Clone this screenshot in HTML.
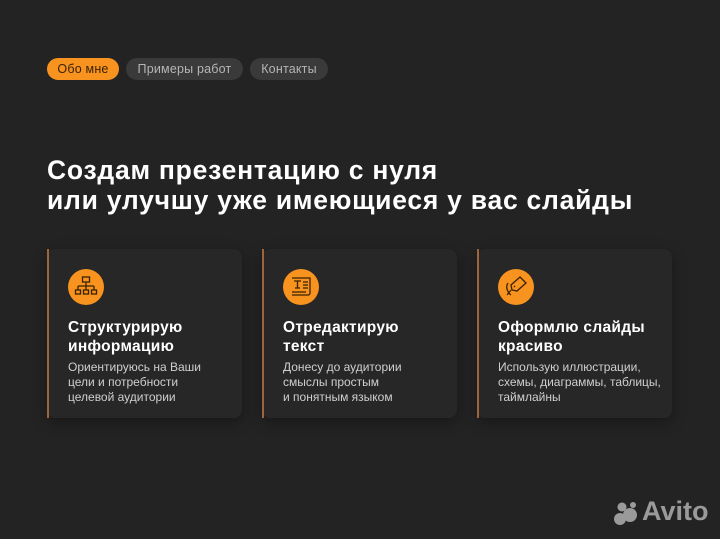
<!DOCTYPE html>
<html><head><meta charset="utf-8"><style>
*{margin:0;padding:0;box-sizing:border-box}
body{width:720px;height:539px;background:#232323;font-family:"Liberation Sans",sans-serif;position:relative;overflow:hidden;color:#fff}
.pill{position:absolute;top:58px;height:22px;border-radius:11px;font-size:12.5px;line-height:22px;text-align:center;color:#b5b5b5;background:#3a3a3a;letter-spacing:0.2px}
h1{position:absolute;left:47px;top:155px;font-size:26.5px;line-height:30px;font-weight:bold;color:#fff;letter-spacing:0.75px;white-space:nowrap}
.card{position:absolute;top:249px;height:169px;width:195px;background:#272727;border-radius:8px;box-shadow:0 4px 14px rgba(0,0,0,.35)}
.card:before{content:"";position:absolute;left:0;top:0;bottom:0;width:2px;background:#a0643a}
.ic{position:absolute;left:21px;top:20px;width:36px;height:36px;border-radius:50%;background:#f7931e}
.t{position:absolute;left:21px;top:69px;font-size:15.5px;line-height:19px;font-weight:bold;letter-spacing:0.3px;white-space:nowrap}
.d{position:absolute;left:21px;top:111px;font-size:12px;line-height:15px;color:#cfcfcf;white-space:nowrap}
</style></head><body>
<div class="pill" style="left:47px;width:72px;background:#f7931e;color:#3a2200">Обо мне</div>
<div class="pill" style="left:126px;width:117px">Примеры работ</div>
<div class="pill" style="left:250px;width:78px">Контакты</div>
<h1>Создам презентацию с нуля<br>или улучшу уже имеющиеся у вас слайды</h1>

<div class="card" style="left:47px"><div class="ic"><svg width="36" height="36" viewBox="0 0 36 36" fill="none" stroke="#3a2200" stroke-width="1.3"><rect x="14.5" y="8" width="7" height="5"/><path d="M18 13v4M10 17h16M10 17v4M18 17v4M26 17v4"/><rect x="7.5" y="21" width="5" height="4"/><rect x="15.5" y="21" width="5" height="4"/><rect x="23.5" y="21" width="5" height="4"/></svg></div>
<div class="t">Структурирую<br>информацию</div><div class="d">Ориентируюсь на Ваши<br>цели и потребности<br>целевой аудитории</div></div>

<div class="card" style="left:262px"><div class="ic"><svg width="36" height="36" viewBox="0 0 36 36" fill="none" stroke="#3a2200" stroke-width="1.3"><path d="M9 9h18v15a2 2 0 0 1-2 2H9"/><path d="M11 12h7M14.5 12v7M12 19h5M20 13h5M20 16h5M20 19h5M9 23h14"/></svg></div>
<div class="t">Отредактирую<br>текст</div><div class="d">Донесу до аудитории<br>смыслы простым<br>и понятным языком</div></div>

<div class="card" style="left:477px"><div class="ic"><svg width="36" height="36" viewBox="0 0 36 36" fill="none" stroke="#3a2200" stroke-width="1.3"><path d="M22 8l6 6-9 8-5-1-1-5z"/><path d="M13 21l-4 5M17 17l-1 1"/><path d="M10 14c-3 4 0 10 3 12"/></svg></div>
<div class="t">Оформлю слайды<br>красиво</div><div class="d">Использую иллюстрации,<br>схемы, диаграммы, таблицы,<br>таймлайны</div></div>

<svg style="position:absolute;left:614px;top:500px" width="26" height="26"><circle cx="6" cy="19" r="6" fill="#9a9a9a"/><circle cx="16" cy="15" r="7" fill="#9a9a9a"/><circle cx="8" cy="7" r="4.5" fill="#9a9a9a"/><circle cx="19" cy="5" r="3" fill="#9a9a9a"/></svg>
<div style="position:absolute;left:642px;top:496px;font-size:27px;font-weight:bold;color:#9a9a9a">Avito</div>
</body></html>
